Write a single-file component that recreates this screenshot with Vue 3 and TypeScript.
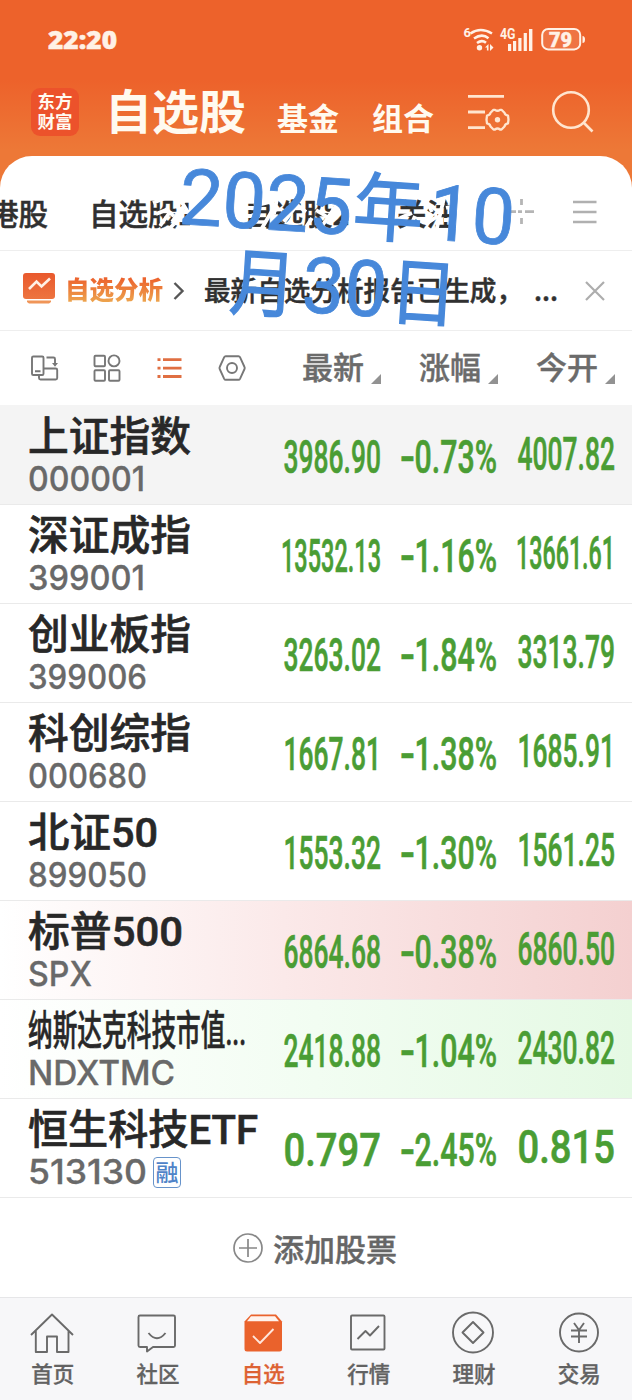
<script setup lang="ts">
interface Quote {
  name: string
  code: string
  last: string
  change: string
  open: string
  nameWidth: number
  codeWidth: number
  tone?: string
  margin?: boolean
}

const quotes: Quote[] = [
  { name: '上证指数', code: '000001', last: '3986.90', change: '0.73%', open: '4007.82', nameWidth: 163, codeWidth: 117, tone: 'pinned' },
  { name: '深证成指', code: '399001', last: '13532.13', change: '1.16%', open: '13661.61', nameWidth: 163, codeWidth: 117 },
  { name: '创业板指', code: '399006', last: '3263.02', change: '1.84%', open: '3313.79', nameWidth: 163, codeWidth: 119 },
  { name: '科创综指', code: '000680', last: '1667.81', change: '1.38%', open: '1685.91', nameWidth: 163, codeWidth: 119 },
  { name: '北证50', code: '899050', last: '1553.32', change: '1.30%', open: '1561.25', nameWidth: 130, codeWidth: 119 },
  { name: '标普500', code: 'SPX', last: '6864.68', change: '0.38%', open: '6860.50', nameWidth: 155, codeWidth: 64, tone: 'up' },
  { name: '纳斯达克科技市值...', code: 'NDXTMC', last: '2418.88', change: '1.04%', open: '2430.82', nameWidth: 218, codeWidth: 147, tone: 'down' },
  { name: '恒生科技ETF', code: '513130', last: '0.797', change: '2.45%', open: '0.815', nameWidth: 230, codeWidth: 119, margin: true },
]

const columns = ['最新', '涨幅', '今开']
const tabs = [
  { id: 'home', label: '首页' },
  { id: 'club', label: '社区' },
  { id: 'pick', label: '自选' },
  { id: 'market', label: '行情' },
  { id: 'wealth', label: '理财' },
  { id: 'trade', label: '交易' },
]
</script>

<template>
  <div class="app">
    <header class="top">
      <div class="status">
        <svg class="clock" width="72" height="26"><text x="0" y="20" textLength="69" lengthAdjust="spacingAndGlyphs">22:20</text></svg>
        <svg class="signals" width="126" height="30" viewBox="462 24 126 30">
          <text x="463.500" y="37" font-size="13">6</text>
          <g fill="none" stroke="#fff1e6" stroke-width="2.600">
            <path d="M470.500 33.500q10-7 21.500 0M474 38.500q8-5.500 14.500-.3M477 43q5-3.500 9-.2" />
          </g>
          <circle cx="479.500" cy="47.800" r="2.700" />
          <path d="M485 47.500l3.500-3.500v6.500h-1.600v-3zM490 44v7l3.500-3.500z" />
          <text x="500" y="39" font-size="14" textLength="15.500" lengthAdjust="spacingAndGlyphs">4G</text>
          <path d="M508 44h3.200v7H508zM513 41h3.200v10H513zM518.300 38h3.200v13h-3.200zM523.700 33h3.200v18h-3.200zM529 29h3.400v22H529z" />
          <rect x="542.200" y="29" width="38" height="20.400" rx="6" fill="#fff1e6" fill-opacity=".13" stroke="#fff1e6" stroke-width="2" />
          <path d="M582.500 36q2.500 0 2.500 3.500t-2.500 3.500z" />
          <text class="heavy" x="549" y="46.500" font-size="20" textLength="23" lengthAdjust="spacingAndGlyphs">79</text>
        </svg>
      </div>
      <div class="title-row">
        <div class="logo"><span>东方</span><span>财富</span></div>
        <h1>自选股</h1>
        <span class="seg fund">基金</span>
        <span class="seg combo">组合</span>
        <svg class="manage" width="44" height="42" viewBox="466 92 44 42" fill="none" stroke="#ffe5cf" stroke-width="2.800">
          <path d="M468 96.300h36M468 112h17M468 127.600h17" />
          <path d="M493.500 109.800h1.500q2.500 2 5 0h1.500l3 3q.5 2.500 3.500 2.800l.5 4.100-.5 3.600q-3 .5-3.500 3.200l-3 3H500q-2.500-2-5 0h-1.500l-3-3q-.5-2.700-3.500-3.200l-.5-3.600.5-4.100q3-.3 3.500-2.800z" stroke-linejoin="round" stroke-width="2.300" />
          <circle cx="497.500" cy="119.700" r="2.700" fill="#ffe5cf" stroke="none" />
        </svg>
        <svg class="search" width="46" height="46" viewBox="550 89 46 46" fill="none" stroke="#ffe5cf" stroke-width="2.600">
          <circle cx="571" cy="110" r="17.800" /><path d="M583.500 122.500l9 9" />
        </svg>
      </div>
    </header>

    <main class="sheet">
      <nav class="groups">
        <span class="g0">港股</span><span class="g1">自选股1</span><span class="g2">自选股2</span><span class="g3">关注</span>
        <svg class="plus" width="26" height="26" viewBox="508 199 26 26" fill="none" stroke="#b5b5b5" stroke-width="2.800">
          <path d="M521.500 199v6M521.500 218v6M509 211.700h7M518 211.700h4M525 211.700h9" />
        </svg>
        <svg class="burger" width="24" height="24" viewBox="0 0 24 24" stroke="#b0b0b0" stroke-width="2.600"><path d="M0 2h23.500M0 12h23.500M0 22h23.500" /></svg>
      </nav>

      <section class="notice">
        <svg class="report" width="32" height="31" viewBox="23 273 32 31">
          <defs><linearGradient id="ember" x1="0" y1="0" x2="0" y2="1"><stop offset="0" stop-color="#e9592d" /><stop offset="1" stop-color="#ed7440" /></linearGradient></defs>
          <rect x="23" y="273" width="32" height="26" rx="3" fill="url(#ember)" />
          <path d="M27 300.500h24v1.500l-2 1.500H29l-2-1.500z" fill="#f09558" />
          <path d="M29 289l7.500-7.500 5 5 8.500-8" fill="none" stroke="#fff0e6" stroke-width="2.600" />
        </svg>
        <b>自选分析</b>
        <svg class="chev" width="12" height="18" viewBox="0 0 12 18" fill="none" stroke="#565656" stroke-width="2.400"><path d="M1.500 1l8 8-8 8" /></svg>
        <svg class="msg" width="356" height="36"><text x="0" y="28" textLength="319" lengthAdjust="spacingAndGlyphs">最新自选分析报告已生成，</text><text x="330" y="28" textLength="24" lengthAdjust="spacingAndGlyphs">...</text></svg>
        <svg class="close" width="20" height="20" viewBox="0 0 20 20" stroke="#adadad" stroke-width="2.200"><path d="M1 1l18 18M19 1L1 19" /></svg>
      </section>

      <section class="tools">
        <svg class="views" width="216" height="30" viewBox="30 353 216 30" fill="none" stroke="#777" stroke-width="1.900">
          <rect x="32" y="356.500" width="11.500" height="18.500" rx="1.300" /><path d="M35 371.200h5.500M46.500 357.500h7q1.500 0 1.500 1.500v5" />
          <path d="M52 363h6l-3 3.800z" fill="#777" stroke="none" />
          <path d="M43.500 368.500h12.200q1.500 0 1.500 1.500v8q0 1.500-1.500 1.500H40.500q-1.500 0-1.500-1.500v-3" />
          <rect x="94.500" y="355.800" width="10.500" height="10.500" rx="1" /><circle cx="114" cy="360.900" r="5.500" />
          <rect x="94.500" y="370.300" width="10.500" height="10.500" rx="1" /><rect x="109" y="370.300" width="10.500" height="10.500" rx="1" />
          <path d="M157.500 359.700h3M163 359.700h18.500M157.500 368.200h3M163 368.200h18.500M157.500 376.500h3M163 376.500h18.500" stroke="#e06f42" stroke-width="2.800" />
          <path d="M225.700 356.200h12.800q1 0 1.500 1l4.500 9.800q.5 1 0 2l-4.500 9.800q-.5 1-1.500 1h-12.800q-1 0-1.500-1l-4.500-9.800q-.5-1 0-2l4.500-9.800q.5-1 1.500-1z" />
          <circle cx="232" cy="368" r="5" />
        </svg>
        <div v-for="c in columns" :key="c" class="col">
          <span>{{ c }}</span>
          <svg width="10" height="10" viewBox="0 0 10 10" fill="#929292"><path d="M10 0v10H0z" /></svg>
        </div>
      </section>

      <section class="list">
        <article v-for="q in quotes" :key="q.code" class="row" :class="q.tone">
          <div class="ident">
            <svg class="name" width="240" height="48"><text x="0" y="38" :textLength="q.nameWidth" lengthAdjust="spacingAndGlyphs">{{ q.name }}</text></svg>
            <div class="code">
              <svg :width="q.codeWidth + 2" height="34"><text x="0" y="29" :textLength="q.codeWidth" lengthAdjust="spacingAndGlyphs">{{ q.code }}</text></svg>
              <em v-if="q.margin">融</em>
            </div>
          </div>
          <svg class="num" width="102" height="50"><text x="101" y="43" text-anchor="end" :textLength="q.last.length > 7 ? 100 : 97.5" lengthAdjust="spacingAndGlyphs">{{ q.last }}</text></svg>
          <svg class="num mid" width="102" height="50"><text x="4" y="43" textLength="15" lengthAdjust="spacingAndGlyphs">-</text><text x="101" y="43" text-anchor="end" textLength="82.5" lengthAdjust="spacingAndGlyphs">{{ q.change }}</text></svg>
          <svg class="num open" width="102" height="50"><text x="101" y="43" text-anchor="end" :textLength="q.open.length > 7 ? 99 : 97.5" lengthAdjust="spacingAndGlyphs">{{ q.open }}</text></svg>
        </article>
      </section>

      <button class="add">
        <svg width="30" height="30" viewBox="0 0 30 30" fill="none" stroke="#888" stroke-width="1.700"><circle cx="15" cy="15" r="14" /><path d="M6 15h18M15 6v18" /></svg>
        <span>添加股票</span>
      </button>
    </main>

    <footer class="tabbar">
      <div v-for="t in tabs" :key="t.id" class="tab" :class="{ on: t.id === 'pick' }">
        <svg width="44" height="44" viewBox="0 0 44 44" fill="none" stroke="#6a6a6a" stroke-width="1.900" stroke-linejoin="round">
          <path v-if="t.id === 'home'" d="M1 23L22 2.500 43 23M5.800 19v21H17V24.500h10V40h11.500V19" />
          <template v-else-if="t.id === 'club'"><path d="M5.500 3.500h33q1.500 0 1.500 1.500v28.500q0 1.500-1.500 1.500H18l-6 4.500V35H5q-1.500 0-1.500-1.500V5q0-1.500 1.500-1.500z" /><path d="M13.500 21q8.500 10.500 17 0" /></template>
          <template v-else-if="t.id === 'pick'"><path d="M10 2.500h25l6 7v27.500q0 2.500-2.500 2.500H6q-2.500 0-2.500-2.500V9.500z" fill="#ea622c" stroke="none" /><path d="M10 4.300h24l4 5H6z" fill="#fff3ed" stroke="none" /><path d="M12 24l7 7 13.500-14" stroke="#ffe6dc" stroke-width="1.900" /></template>
          <template v-else-if="t.id === 'market'"><rect x="5" y="3.500" width="33.500" height="34" rx="1" /><path d="M11.500 27l8-8 4.500 4.500 9-9.500" /></template>
          <template v-else-if="t.id === 'wealth'"><circle cx="22" cy="20.500" r="20" /><path d="M22 10l10.500 10.500L22 31 11.500 20.500z" /></template>
          <template v-else><circle cx="22" cy="20.500" r="19" /><path d="M17 11l5 7 5-7M14 18.500h16M14 24.500h16M22 18v13" /></template>
        </svg>
        <span>{{ t.label }}</span>
      </div>
    </footer>

    <svg class="stamp" width="632" height="200" viewBox="0 150 632 200">
      <g class="erase">
        <path d="M153 203l14-6M156 214l10-4 8 6M160 226l10-14M172 222l12-16M178 196l22 36M184 212h24M192 196v36M166 232l8-8" />
        <path d="M254 206l16-4M244 208h14M244 216h16M262 228l14-24M268 198l8 14M278 194l-4 20M284 222l12-16M296 204l10 8M304 230l8-12M316 210l16 10M322 226l18-26M334 204l8 10M343 217l8-6" />
        <path d="M398 203h12M400 218l12-5M409 230l6-14M424 196l8 16M426 224l12-8M436 232l8-34M446 208l12-3M444 220h13" />
      </g>
      <g transform="rotate(3.700 182 223)">
        <text x="178" y="224" textLength="173" lengthAdjust="spacingAndGlyphs">2025</text>
        <text class="cn" x="352" y="222" textLength="70" lengthAdjust="spacingAndGlyphs">年</text>
        <text x="428" y="223.500" textLength="86" lengthAdjust="spacingAndGlyphs">10</text>
        <text class="cn" x="234" y="305" textLength="66" lengthAdjust="spacingAndGlyphs">月</text>
        <text x="306" y="304" textLength="85" lengthAdjust="spacingAndGlyphs">30</text>
        <text class="cn" x="394" y="304" textLength="67" lengthAdjust="spacingAndGlyphs">日</text>
      </g>
    </svg>
  </div>
</template>

<style scoped>
.app { position: relative; width: 632px; height: 1400px; overflow: hidden; background: #fff; display: flex; flex-direction: column; font-family: Roboto, "Noto Sans CJK SC", sans-serif; }
svg { display: block; flex: none; overflow: visible; }
.top { height: 196px; background: linear-gradient(#ed622b 0, #ed622b 80px, #ed7837 150px); }
.status { height: 78px; display: flex; justify-content: space-between; padding: 0 44px 0 48px; box-sizing: border-box; }
.clock { margin-top: 29px; }
.clock text { font: 900 25px "Noto Sans", sans-serif; fill: #fff1e6; stroke: #fff1e6; stroke-width: .5px; }
.signals { margin-top: 24px; fill: #fff1e6; }
.signals text { font-family: Roboto, sans-serif; font-weight: 700; }
.signals .heavy { font-weight: 900; stroke: #fff1e6; stroke-width: .5px; }
.title-row { display: flex; height: 78px; padding-left: 31px; align-items: flex-start; color: #fffaf0; white-space: nowrap; }
.logo { width: 48px; height: 48px; margin-top: 10px; padding-bottom: 3px; box-sizing: border-box; border-radius: 9px; background: #ec522b; display: flex; flex-direction: column; align-items: center; justify-content: center; font: 700 17.500px/20px "Noto Sans CJK SC", sans-serif; }
h1 { margin: -2px 0 0 26px; width: 141px; font: 700 47px/66px "Noto Sans CJK SC", sans-serif; }
.seg { font: 700 31px/44px "Noto Sans CJK SC", sans-serif; margin-top: 17px; }
.fund { margin-left: 31px; }
.combo { margin-left: 33px; }
.manage { margin: 14px 0 0 32px; }
.search { margin: 11px 0 0 40px; }
.sheet { flex: 1; margin-top: -40px; border-radius: 32px 32px 0 0; background: #fff; display: flex; flex-direction: column; min-height: 0; }
.groups { height: 95px; box-sizing: border-box; border-bottom: 1px solid #eee; display: flex; align-items: center; padding-top: 17px; font: 500 29.500px/40px "Noto Sans CJK SC", sans-serif; color: #303030; -webkit-text-stroke: .5px #303030; white-space: nowrap; }
.g0 { margin-left: -11px; width: 100px; }
.g1 { width: 155px; }
.g2 { width: 153px; }
.g3 { width: 111px; }
.burger { margin-left: 39px; }
.notice { height: 80px; box-sizing: border-box; border-bottom: 1px solid #eee; display: flex; align-items: center; padding-left: 23px; }
.report { margin-top: -4px; }
.notice b { margin: -4px 0 0 10px; font: 900 24.500px/36px "Noto Sans CJK SC", sans-serif; background: linear-gradient(#ec622d 20%, #eda34d 85%); -webkit-background-clip: text; background-clip: text; color: transparent; }
.chev { margin-left: 10px; }
.msg { margin-left: 19px; }
.msg text { font: 500 27px "Noto Sans CJK SC", sans-serif; fill: #303030; stroke: #303030; stroke-width: .5px; }
.close { margin-left: 25px; }
.tools { height: 74px; display: flex; align-items: center; padding-left: 30px; }
.views { margin-right: 56px; }
.col { flex: none; width: 79px; margin-right: 38px; height: 44px; display: flex; align-items: flex-end; justify-content: space-between; font: 500 31px/44px "Noto Sans CJK SC", sans-serif; color: #6b6b6b; -webkit-text-stroke: .4px #6b6b6b; }
.col span { margin-bottom: 2px; }
.col svg { margin-bottom: 6px; }
.row { height: 99px; box-sizing: border-box; border-bottom: 1px solid #eaeaea; display: flex; padding-left: 28px; }
.pinned { background: #f4f4f4; height: 100px; }
.up { background: linear-gradient(90deg, #fff, #fbe9e9 45%, #f4d0d0); }
.down { background: linear-gradient(90deg, #fff, #f2fdf2 50%, #e5f9e4); }
.ident { width: 252px; flex: none; }
.name { margin-top: 7px; }
.name text { font: 500 41px Roboto, "Noto Sans CJK SC", sans-serif; fill: #282828; stroke: #282828; stroke-width: .6px; }
.pinned .name { margin-top: 8px; }
.code { display: flex; padding-top: 1px; }
.code text { font: 500 34px Inter, sans-serif; fill: #696969; stroke: #696969; stroke-width: .3px; }
em { margin: 2px 0 0 4px; width: 26px; height: 29px; border: 1px solid #6793ca; border-radius: 4px; font: 500 23px/26px "Noto Sans CJK SC", sans-serif; color: #4f83c8; text-align: center; }
.num { margin-top: 24px; }
.num text { font: 500 46px Roboto, sans-serif; fill: #4a9d34; stroke: #4a9d34; stroke-width: .6px; }
.mid { margin-left: 14px; }
.open { margin: 21px 0 0 16px; }
.pinned .num { margin-top: 25px; }
.pinned .open { margin-top: 22px; }
.add { height: 99px; border: 0; background: none; padding: 0 2px 0 0; display: flex; align-items: center; justify-content: center; gap: 10px; font: 500 31px/44px "Noto Sans CJK SC", sans-serif; color: #666; -webkit-text-stroke: .4px #666; }
.tabbar { height: 103px; box-sizing: border-box; border-top: 1px solid #e6e6e8; background: #f7f7f9; display: flex; }
.tab { flex: 1; display: flex; flex-direction: column; align-items: center; padding-top: 14px; font: 500 21.500px/30px "Noto Sans CJK SC", sans-serif; color: #626262; -webkit-text-stroke: .3px; }
.tab svg { margin-left: -1px; }
.tab span { margin-top: 2px; }
.on { color: #dd6233; }
.stamp { position: absolute; left: 0; top: 150px; }
.erase { fill: none; stroke: #fff; stroke-width: 3.800px; }
.stamp text { font: 400 78px Roboto, sans-serif; fill: #4788da; stroke: #4788da; stroke-width: .8px; }
.stamp .cn { font: 400 74px "Noto Sans CJK SC", sans-serif; stroke-width: 1.400px; }
</style>
